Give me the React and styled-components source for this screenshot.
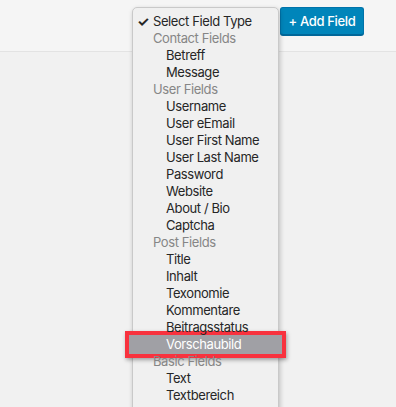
import React from 'react';
import styled, { createGlobalStyle, css } from 'styled-components';

const GlobalStyle = createGlobalStyle`
  html, body {
    margin: 0;
    padding: 0;
    background: #f1f1f1;
    font-family: Inter, "Helvetica Neue", Arial, sans-serif;
    -webkit-font-smoothing: antialiased;
  }
`;

const Page = styled.div`
  position: relative;
  width: 396px;
  height: 407px;
  overflow: hidden;
`;

const Toolbar = styled.div`
  height: 52px;
  box-sizing: border-box;
  background: #f5f5f5;
  border-bottom: 1px solid #e3e3e3;
  display: flex;
  justify-content: flex-end;
  align-items: flex-start;
  padding: 7px 32px 0 0;
`;

const AddButton = styled.button`
  height: 28px;
  width: 84px;
  padding: 0;
  border: 1px solid #0073aa;
  border-bottom-color: #006799;
  border-radius: 3px;
  background: #0085ba;
  box-shadow: 0 1px 0 #006799;
  color: #fff;
  font-family: inherit;
  font-size: 13px;
  font-weight: 500;
  letter-spacing: -0.35px;
`;

const Menu = styled.ul`
  position: absolute;
  left: 132px;
  top: 7px;
  width: 147px;
  box-sizing: border-box;
  margin: 0;
  padding: 5px 0 0;
  list-style: none;
  background: #f0f0f0;
  border: 1px solid #c9c9c9;
  border-radius: 5px;
  box-shadow: 1px 2px 5px rgba(0, 0, 0, 0.22);
  height: 440px;
`;

const Row = styled.li`
  position: relative;
  height: 17px;
  line-height: 17px;
  font-size: 13px;
  letter-spacing: -0.4px;
  white-space: nowrap;
  color: #262626;
  padding-left: ${p => (p.$level === 2 ? 33 : 20)}px;
  ${p =>
    p.$group &&
    css`
      color: #868686;
    `}
`;

const Check = styled.span`
  position: absolute;
  left: 4px;
  top: 0;
  font-size: 14px;
  font-weight: 700;
`;

const Label = styled.span`
  position: relative;
  z-index: 1;
  ${p =>
    p.$active &&
    css`
      color: #fff;
    `}
`;

const Marker = styled.div`
  position: absolute;
  left: -8px;
  right: -8px;
  top: -5px;
  bottom: -5px;
  border: 4px solid #f8323e;
  background: #a0a0a5;
  box-shadow: 1px 2px 4px rgba(0, 0, 0, 0.35);
`;

const options = [
  { text: 'Select Field Type', level: 1, checked: true },
  { text: 'Contact Fields', group: true },
  { text: 'Betreff' },
  { text: 'Message' },
  { text: 'User Fields', group: true },
  { text: 'Username' },
  { text: 'User eEmail' },
  { text: 'User First Name' },
  { text: 'User Last Name' },
  { text: 'Password' },
  { text: 'Website' },
  { text: 'About / Bio' },
  { text: 'Captcha' },
  { text: 'Post Fields', group: true },
  { text: 'Title' },
  { text: 'Inhalt' },
  { text: 'Texonomie' },
  { text: 'Kommentare' },
  { text: 'Beitragsstatus' },
  { text: 'Vorschaubild', active: true },
  { text: 'Basic Fields', group: true },
  { text: 'Text' },
  { text: 'Textbereich' },
];

export default function App() {
  return (
    <Page>
      <GlobalStyle />
      <Toolbar>
        <AddButton>+ Add Field</AddButton>
      </Toolbar>
      <Menu>
        {options.map(o => (
          <Row key={o.text} $group={o.group} $level={o.group || o.level === 1 ? 1 : 2}>
            {o.checked && <Check>✓</Check>}
            {o.active && <Marker />}
            <Label $active={o.active}>{o.text}</Label>
          </Row>
        ))}
      </Menu>
    </Page>
  );
}
